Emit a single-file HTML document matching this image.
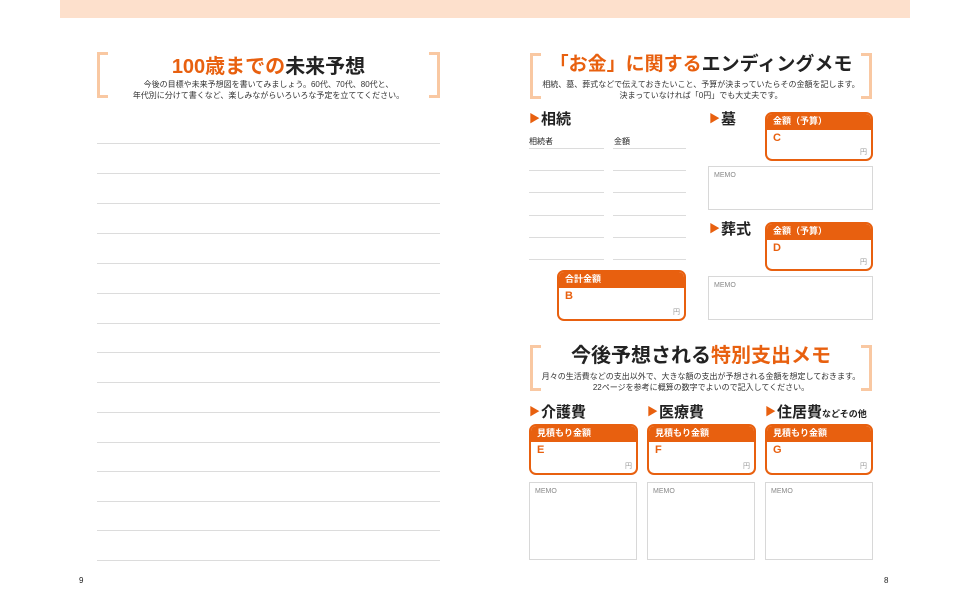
<!DOCTYPE html>
<html><head><meta charset="utf-8"><style>
*{margin:0;padding:0;box-sizing:border-box}
body{width:970px;height:600px;background:#fff;position:relative;overflow:hidden;font-family:"Liberation Sans","Noto Sans CJK JP",sans-serif;color:#222}
.a{position:absolute}
.bl{position:absolute;width:11px;height:46px;border:3px solid #f9c8a2;border-right:none}
.br{position:absolute;width:11px;height:46px;border:3px solid #f9c8a2;border-left:none}
.t{position:absolute;text-align:center;font-weight:bold;font-size:20px;line-height:24px;white-space:nowrap}
.o{color:#e8600f}
.s{position:absolute;text-align:center;font-size:8px;line-height:11px;white-space:nowrap;color:#333}
.ln{position:absolute;height:1px;background:#dcdcdc}
.h{position:absolute;font-weight:bold;font-size:15px;line-height:18px;white-space:nowrap}
.h b{color:#e8600f;font-size:11px;vertical-align:2px;margin-right:1px}
.box{position:absolute;border:2px solid #e8600f;border-radius:7px;overflow:hidden;background:#fff}
.box .hd{background:#e8600f;color:#fff;font-size:9px;font-weight:bold;height:16px;line-height:15px;padding-left:6px}
.box .l{color:#e8600f;font-weight:bold;font-size:11px;padding-left:6px;line-height:15px;padding-top:1px}
.box .y{position:absolute;right:4px;bottom:2px;font-size:7px;color:#999}
.memo{position:absolute;border:1px solid #d8d8d8;font-size:7px;color:#888;padding:5px 5px}
</style></head><body>
<div class="a" style="left:60px;top:0;width:850px;height:18px;background:#fde0cc"></div>

<div class="bl" style="left:97px;top:52px"></div>
<div class="br" style="left:429px;top:52px"></div>
<div class="t" style="left:97px;width:343px;top:55px"><span class="o">100歳までの</span>未来予想</div>
<div class="s" style="left:97px;width:343px;top:79px">今後の目標や未来予想図を書いてみましょう。60代、70代、80代と、<br>年代別に分けて書くなど、楽しみながらいろいろな予定を立ててください。</div>
<div class="ln" style="left:97px;width:343px;top:143px"></div>
<div class="ln" style="left:97px;width:343px;top:173px"></div>
<div class="ln" style="left:97px;width:343px;top:203px"></div>
<div class="ln" style="left:97px;width:343px;top:233px"></div>
<div class="ln" style="left:97px;width:343px;top:263px"></div>
<div class="ln" style="left:97px;width:343px;top:293px"></div>
<div class="ln" style="left:97px;width:343px;top:323px"></div>
<div class="ln" style="left:97px;width:343px;top:352px"></div>
<div class="ln" style="left:97px;width:343px;top:382px"></div>
<div class="ln" style="left:97px;width:343px;top:412px"></div>
<div class="ln" style="left:97px;width:343px;top:442px"></div>
<div class="ln" style="left:97px;width:343px;top:471px"></div>
<div class="ln" style="left:97px;width:343px;top:501px"></div>
<div class="ln" style="left:97px;width:343px;top:530px"></div>
<div class="ln" style="left:97px;width:343px;top:560px"></div>
<div class="a" style="left:79px;top:576px;font-size:8px">9</div>
<div class="a" style="left:884px;top:576px;font-size:8px">8</div>

<div class="bl" style="left:530px;top:53px"></div>
<div class="br" style="left:861px;top:53px"></div>
<div class="t" style="left:530px;width:342px;top:53px;font-size:19px"><span class="o">「お金」に関する</span>エンディングメモ</div>
<div class="s" style="left:530px;width:342px;top:79px">相続、墓、葬式などで伝えておきたいこと、予算が決まっていたらその金額を記します。<br>決まっていなければ「0円」でも大丈夫です。</div>

<div class="h" style="left:529px;top:110px"><b>▶</b>相続</div>
<div class="a" style="left:529px;top:136px;font-size:8px">相続者</div>
<div class="a" style="left:614px;top:136px;font-size:8px">金額</div>
<div class="ln" style="left:529px;width:75px;top:148px"></div><div class="ln" style="left:613px;width:73px;top:148px"></div>
<div class="ln" style="left:529px;width:75px;top:170px"></div><div class="ln" style="left:613px;width:73px;top:170px"></div>
<div class="ln" style="left:529px;width:75px;top:192px"></div><div class="ln" style="left:613px;width:73px;top:192px"></div>
<div class="ln" style="left:529px;width:75px;top:215px"></div><div class="ln" style="left:613px;width:73px;top:215px"></div>
<div class="ln" style="left:529px;width:75px;top:237px"></div><div class="ln" style="left:613px;width:73px;top:237px"></div>
<div class="ln" style="left:529px;width:75px;top:259px"></div><div class="ln" style="left:613px;width:73px;top:259px"></div>
<div class="box" style="left:557px;top:270px;width:129px;height:51px"><div class="hd">合計金額</div><div class="l">B</div><div class="y">円</div></div>

<div class="h" style="left:709px;top:110px"><b>▶</b>墓</div>
<div class="box" style="left:765px;top:112px;width:108px;height:49px"><div class="hd">金額（予算）</div><div class="l">C</div><div class="y">円</div></div>
<div class="memo" style="left:708px;top:166px;width:165px;height:44px">MEMO</div>
<div class="h" style="left:709px;top:220px"><b>▶</b>葬式</div>
<div class="box" style="left:765px;top:222px;width:108px;height:49px"><div class="hd">金額（予算）</div><div class="l">D</div><div class="y">円</div></div>
<div class="memo" style="left:708px;top:276px;width:165px;height:44px">MEMO</div>

<div class="bl" style="left:530px;top:345px"></div>
<div class="br" style="left:861px;top:345px"></div>
<div class="t" style="left:530px;width:342px;top:344px">今後予想される<span class="o">特別支出メモ</span></div>
<div class="s" style="left:530px;width:342px;top:371px">月々の生活費などの支出以外で、大きな額の支出が予想される金額を想定しておきます。<br>22ページを参考に概算の数字でよいので記入してください。</div>

<div class="h" style="left:529px;top:403px"><b>▶</b>介護費</div>
<div class="h" style="left:647px;top:403px"><b>▶</b>医療費</div>
<div class="h" style="left:765px;top:403px"><b>▶</b>住居費<span style="font-size:9px">などその他</span></div>
<div class="box" style="left:529px;top:424px;width:109px;height:51px"><div class="hd">見積もり金額</div><div class="l">E</div><div class="y">円</div></div>
<div class="box" style="left:647px;top:424px;width:109px;height:51px"><div class="hd">見積もり金額</div><div class="l">F</div><div class="y">円</div></div>
<div class="box" style="left:765px;top:424px;width:108px;height:51px"><div class="hd">見積もり金額</div><div class="l">G</div><div class="y">円</div></div>
<div class="memo" style="left:529px;top:482px;width:108px;height:78px">MEMO</div>
<div class="memo" style="left:647px;top:482px;width:108px;height:78px">MEMO</div>
<div class="memo" style="left:765px;top:482px;width:108px;height:78px">MEMO</div>
</body></html>
